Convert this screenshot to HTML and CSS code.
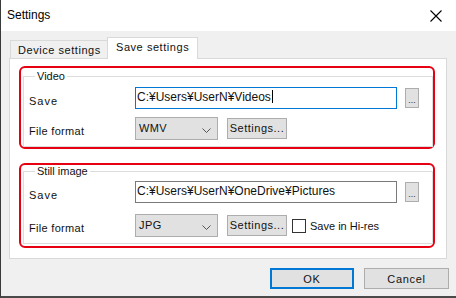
FILE: index.html
```html
<!DOCTYPE html>
<html>
<head>
<meta charset="utf-8">
<link rel="stylesheet" href="styles.css">
</head>
<body>
<div class="window">
  <div class="titlebar">
    <span class="title">Settings</span>
    <svg class="close" width="12" height="12" viewBox="0 0 12 12"><path d="M0.5 0.5 L11.5 11.5 M11.5 0.5 L0.5 11.5" stroke="#000" stroke-width="1.1" fill="none"/></svg>
  </div>
  <div class="content">
    <div class="tabs">
      <div class="tab">Device settings</div>
      <div class="tab active">Save settings</div>
    </div>
    <div class="panel">
      <div class="hl hl-video">
        <fieldset class="group">
          <legend>Video</legend>
          <div class="rows">
            <div class="row">
              <span class="label label-save">Save</span>
              <div class="field focus">C:¥Users¥UserN¥Videos<span class="caret"></span></div>
              <div class="browse">...</div>
            </div>
            <div class="row">
              <span class="label">File format</span>
              <div class="combo"><span>WMV</span><svg width="9" height="6" viewBox="0 0 9 6"><path d="M0.5 0.5 L4.5 4.5 L8.5 0.5" stroke="#555" fill="none"/></svg></div>
              <div class="btn small">Settings...</div>
            </div>
          </div>
        </fieldset>
      </div>
      <div class="hl hl-still">
        <fieldset class="group">
          <legend>Still image</legend>
          <div class="rows rows-still">
            <div class="row">
              <span class="label label-save">Save</span>
              <div class="field">C:¥Users¥UserN¥OneDrive¥Pictures</div>
              <div class="browse">...</div>
            </div>
            <div class="row">
              <span class="label">File format</span>
              <div class="combo"><span>JPG</span><svg width="9" height="6" viewBox="0 0 9 6"><path d="M0.5 0.5 L4.5 4.5 L8.5 0.5" stroke="#555" fill="none"/></svg></div>
              <div class="btn small">Settings...</div>
              <span class="check"></span>
              <span class="check-label">Save in Hi-res</span>
            </div>
          </div>
        </fieldset>
      </div>
    </div>
    <div class="actions">
      <div class="btn action primary">OK</div>
      <div class="btn action">Cancel</div>
    </div>
  </div>
</div>
</body>
</html>
```

FILE: styles.css
```css
* { box-sizing: border-box; }
html, body { margin: 0; padding: 0; }
body {
  width: 456px;
  height: 298px;
  overflow: hidden;
  font-family: "Liberation Sans", Arial, sans-serif;
  color: #111;
  background: #f0f0f0;
}
.window {
  width: 456px;
  height: 298px;
  border-left: 1px solid #3a3a3a;
  border-bottom: 2px solid #4a4a4a;
  background: #f0f0f0;
  display: flex;
  flex-direction: column;
}
.titlebar {
  height: 31px;
  flex: none;
  background: #fff;
  display: flex;
  align-items: center;
  justify-content: space-between;
  padding: 0 14px 1px 6px;
}
.title { font-size: 12px; color: #000; }
.close { display: block; margin-top: 1px; }
.content {
  flex: 1;
  display: flex;
  flex-direction: column;
  padding: 0 0 0 8px;
}
.tabs {
  height: 27px;
  display: flex;
  align-items: flex-end;
  padding-left: 1px;
  position: relative;
  z-index: 1;
}
.tab {
  font-size: 11px;
  letter-spacing: 0.55px;
  height: 18px;
  padding: 0 6px 0 7px;
  display: flex;
  align-items: center;
  border: 1px solid #d9d9d9;
  border-bottom: none;
  background: #f0f0f0;
  width: 98px;
}
.tab.active {
  background: #fff;
  height: 22px;
  margin-bottom: -1px;
  width: 91px;
  margin-left: -1px;
  padding: 0 6px 3px 8px;
}
.panel {
  width: 438px;
  height: 201px;
  border: 1px solid #d9d9d9;
  background: #fff;
  padding: 7px 11px 0 9px;
  display: flex;
  flex-direction: column;
  gap: 14px;
}
.hl {
  border: 2px solid #e60012;
  border-radius: 6px;
  padding: 2px 0 0 2px;
}
.hl-still { padding-top: 0; padding-bottom: 2px; }
.group {
  margin: 0;
  border: 1px solid #dcdcdc;
  padding: 0 11px 6px 5px;
  min-width: 0;
}
.group legend {
  font-size: 11px;
  line-height: 13px;
  padding: 0 2px 0 2px;
  margin-left: 6px;
}
.rows {
  display: flex;
  flex-direction: column;
  gap: 8px;
  padding-top: 4px;
}
.rows-still { gap: 11px; padding-top: 3px; }
.row {
  display: flex;
  align-items: center;
  font-size: 11px;
}
.label {
  width: 106px;
  flex: none;
  padding-top: 4px;
  letter-spacing: 0.3px;
}
.label-save { padding-top: 5px; letter-spacing: 1px; }
.field {
  width: 262px;
  height: 22px;
  border: 1px solid #7a7a7a;
  background: #fff;
  font-size: 12px;
  padding: 0 0 3px 1px;
  display: flex;
  align-items: center;
  white-space: nowrap;
  overflow: hidden;
}
.field.focus { border-color: #0078d7; }
.caret {
  display: inline-block;
  width: 1px;
  height: 13px;
  background: #000;
  margin-left: 1px;
}
.browse {
  margin-left: 8px;
  width: 14px;
  height: 20px;
  border: 1px solid #adadad;
  background: #e1e1e1;
  font-size: 9px;
  color: #333;
  display: flex;
  align-items: flex-end;
  justify-content: center;
  padding-bottom: 2px;
  line-height: 1;
}
.combo {
  width: 83px;
  height: 23px;
  border: 1px solid #adadad;
  background: #e1e1e1;
  display: flex;
  align-items: center;
  justify-content: space-between;
  padding: 0 6px 2px 3px;
  letter-spacing: 0.4px;
}
.combo svg { margin-top: 6px; }
.btn {
  border: 1px solid #adadad;
  background: #e1e1e1;
  display: flex;
  align-items: center;
  justify-content: center;
  font-size: 11px;
  letter-spacing: 0.5px;
}
.btn.small {
  margin-left: 9px;
  width: 60px;
  height: 21px;
  padding-bottom: 1px;
}
.check {
  margin-left: 5px;
  width: 14px;
  height: 14px;
  border: 1px solid #333;
  background: #fff;
  flex: none;
}
.check-label {
  margin-left: 4px;
  font-size: 11px;
}
.actions {
  display: flex;
  justify-content: flex-end;
  gap: 10px;
  padding: 9px 7px 0 0;
}
.btn.action {
  width: 85px;
  height: 21px;
  letter-spacing: 0.7px;
}
.btn.primary {
  width: 84px;
  border: 1px solid #0078d7;
  box-shadow: inset 0 0 0 1px #0078d7;
}
```
